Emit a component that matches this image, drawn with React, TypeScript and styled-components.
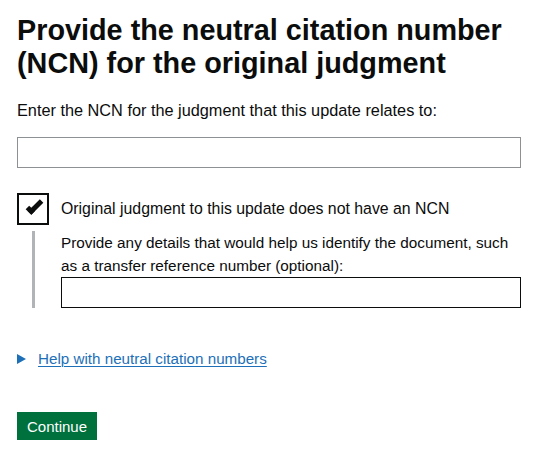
import React from "react";
import styled, { createGlobalStyle } from "styled-components";

const Global = createGlobalStyle`
  html, body { margin: 0; padding: 0; background: #ffffff; }
  body { font-family: "Liberation Sans", Arial, Helvetica, sans-serif; color: #0b0c0c; }
  * { box-sizing: border-box; }
`;

const Page = styled.main`
  padding: 14px 19px 0 17px;
  width: 540px;
`;

const Heading = styled.h1`
  margin: 0 0 21px 0;
  font-size: 28.8px;
  line-height: 32.5px;
  font-weight: 700;
  color: #0b0c0c;
`;

const Label = styled.label`
  display: block;
  font-size: 16.3px;
  line-height: 20px;
  margin: 0 0 17px 0;
`;

const TextInput = styled.input<{ $strong?: boolean }>`
  display: block;
  width: 100%;
  height: 31px;
  margin: 0;
  padding: 4px;
  border: 1px solid ${(p) => (p.$strong ? "#0b0c0c" : "#8e9194")};
  border-radius: 0;
  font: inherit;
  font-size: 16px;
  background: #fff;
  outline: none;
`;

const CheckRow = styled.div`
  display: flex;
  align-items: center;
  gap: 12px;
  margin-top: 25px;
`;

const Box = styled.span`
  position: relative;
  flex: 0 0 auto;
  width: 32px;
  height: 32px;
  border: 2px solid #0b0c0c;
  background: #fff;
`;

const Tick = styled.span`
  position: absolute;
  left: 7px;
  top: 7px;
  width: 17px;
  height: 8px;
  border-style: solid;
  border-color: #0b0c0c;
  border-width: 0 0 5px 5px;
  transform: rotate(-45deg);
`;

const CheckLabel = styled.span`
  font-size: 15.85px;
  line-height: 20px;
`;

const Conditional = styled.div`
  margin: 6px 0 0 15px;
  padding: 0 0 0 26px;
  border-left: 3px solid #b1b4b6;
`;

const CondLabel = styled.label`
  display: block;
  font-size: 15.3px;
  line-height: 23px;
  margin: 0;
`;

const Details = styled.div`
  display: flex;
  align-items: center;
  gap: 12px;
  margin-top: 41px;
`;

const Arrow = styled.span`
  width: 0;
  height: 0;
  border-style: solid;
  border-width: 5.5px 0 5.5px 9px;
  border-color: transparent transparent transparent #1d70b8;
`;

const Link = styled.a`
  color: #1d70b8;
  font-size: 15.2px;
  line-height: 20px;
  text-decoration: underline;
  text-underline-offset: 2px;
  text-decoration-thickness: 1px;
`;

const Button = styled.button`
  display: inline-block;
  margin-top: 43px;
  padding: 5px 10px 4px;
  border: 0;
  border-radius: 0;
  background: #00703c;
  color: #fff;
  font-family: inherit;
  font-size: 15px;
  line-height: 19px;
  box-shadow: 0 3px 0 #002d18;
  cursor: pointer;
`;

export default function App() {
  return (
    <>
      <Global />
      <Page>
        <Heading>Provide the neutral citation number (NCN) for the original judgment</Heading>
        <Label htmlFor="ncn">Enter the NCN for the judgment that this update relates to:</Label>
        <TextInput id="ncn" type="text" />
        <CheckRow>
          <Box>
            <Tick />
          </Box>
          <CheckLabel>Original judgment to this update does not have an NCN</CheckLabel>
        </CheckRow>
        <Conditional>
          <CondLabel htmlFor="details">
            Provide any details that would help us identify the document, such as a transfer reference number (optional):
          </CondLabel>
          <TextInput id="details" type="text" $strong />
        </Conditional>
        <Details>
          <Arrow />
          <Link href="#">Help with neutral citation numbers</Link>
        </Details>
        <Button type="button">Continue</Button>
      </Page>
    </>
  );
}
